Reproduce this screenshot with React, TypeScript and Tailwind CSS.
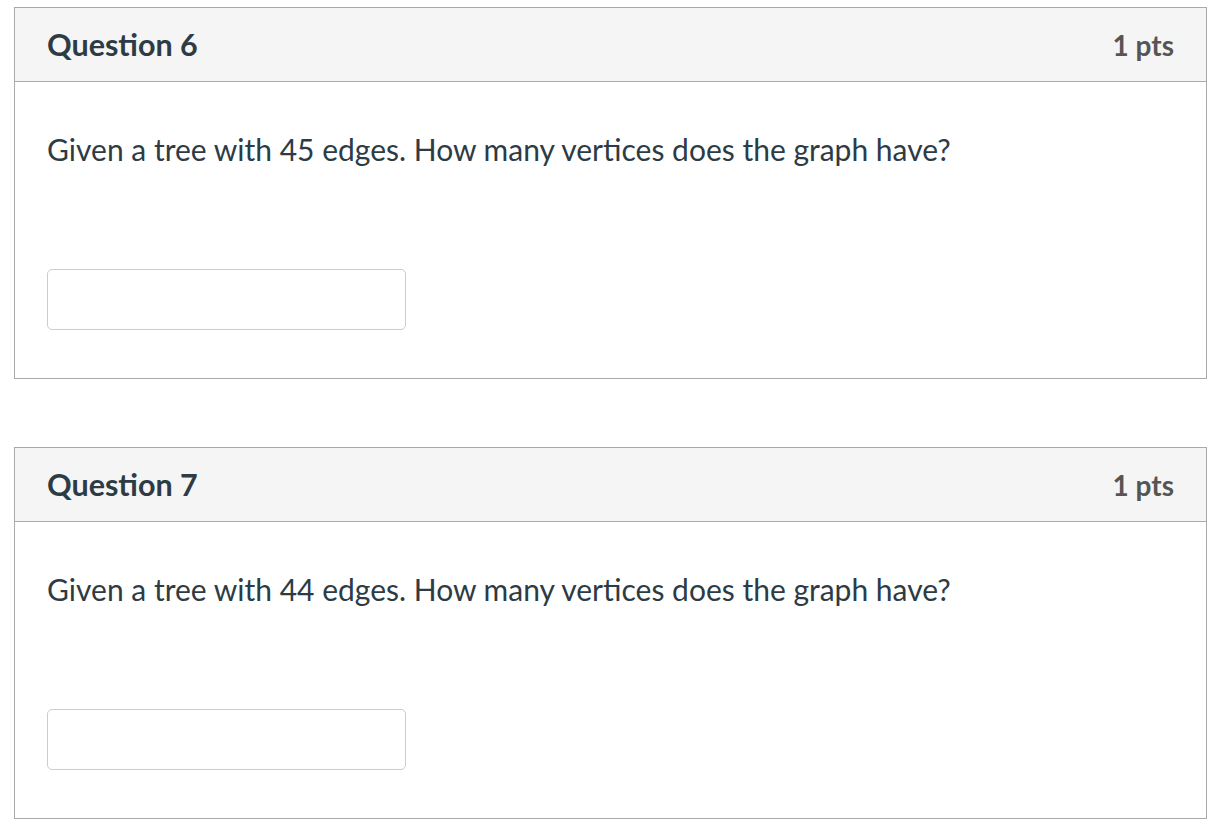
import React from "react";

type Q = { n: number; pts: number; text: string };

const questions: Q[] = [
  { n: 6, pts: 1, text: "Given a tree with 45 edges. How many vertices does the graph have?" },
  { n: 7, pts: 1, text: "Given a tree with 44 edges. How many vertices does the graph have?" },
];

const QuestionCard = ({ q }: { q: Q }) => (
  <div className="border border-[#aaaaaa] bg-white">
    <div className="flex h-[74px] items-center justify-between border-b border-[#aaaaaa] bg-[#f5f5f5] pl-[32px] pr-[32px]">
      <h2 className="text-[30.5px] font-bold text-[#2d3b45]">Question {q.n}</h2>
      <span className="text-[28px] font-bold text-[#555555]">{q.pts} pts</span>
    </div>
    <div className="px-[32px] pt-[47px] pb-[48px]">
      <p className="text-[30px] leading-[40px] text-[#2d3b45]">{q.text}</p>
      <input
        type="text"
        className="mt-[100px] block h-[61px] w-[359px] rounded-[5px] border border-[#cccccc] bg-white px-3 text-[24px] outline-none"
      />
    </div>
  </div>
);

export default function App() {
  return (
    <div className="min-h-[820px] bg-white pt-[7px] pl-[14px] pr-[3px]" style={{ fontFamily: "Lato, 'Liberation Sans', sans-serif" }}>
      <div className="flex flex-col gap-[68px]">
        {questions.map((q) => (
          <QuestionCard key={q.n} q={q} />
        ))}
      </div>
    </div>
  );
}
